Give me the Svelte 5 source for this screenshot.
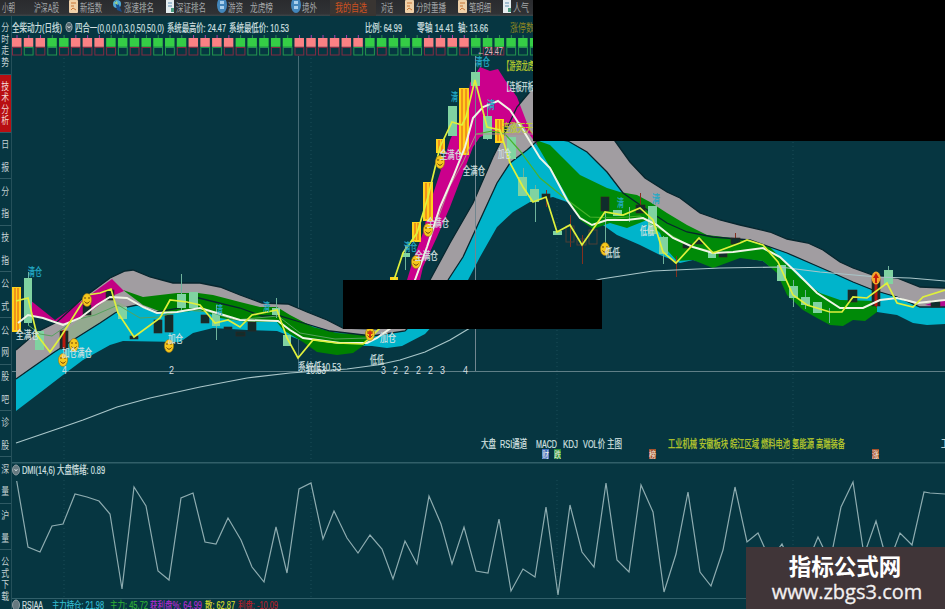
<script>
  const tools = [
    { w: 28, pad: 2, label: '小朝', lw: 13 },
    { w: 41, pad: 6, label: '沪深A股', lw: 25 },
    { w: 44, icon: 'sheet', label: '新指数', lw: 22 },
    { w: 52, icon: 'globe', label: '涨速排名', lw: 30 },
    { w: 52, icon: 'page', label: '深证排名', lw: 30 },
    { w: 33, icon: 'ball', label: '游资', lw: 15 },
    { w: 41, label: '龙虎榜', lw: 23 },
    { w: 39, icon: 'ball', label: '境外', lw: 15 },
    { w: 46, pad: 5, label: '我的自选', lw: 32, hot: true },
    { w: 29, pad: 5, label: '对话', lw: 12 },
    { w: 53, icon: 'sheet', label: '分时重播', lw: 30 },
    { w: 44, icon: 'sheet', label: '笔明细', lw: 22 },
    { w: 31, icon: 'page', label: '人气', lw: 16 }
  ];
  const side = ['日报', '分指', '技指', '公式', '公网', '股吧', '诊股', '深量', '沪量'];

  const topRow = 'PPPGGPPPGGGGGGGPPPPGGGGGPPPPPPGGGGGPPPPGGGGGG';
  const lowRow = 'RGRGRRRRRGRRGGRRGGRRGGRGRRRRRGGRGGGRRGRGRRGGG';

  const dmi = '16.7,481 28,547 40,552 52,526 63,524 75,494 87,497 99,501 110,514 122,589 134,487 146,506 158,571 169,580 181,498 193,493 205,542 216,544 228,518 241,540 252,567 264,582 276,527 287,573 299,489 311,483 323,539 334,511 347,538 358,553 370,535 382,549 393,579 405,541 417,564 429,496 441,524 452,564 464,527 476,571 488,573 499,519 511,591 523,569 535,577 546,507 558,595 570,505 582,552 594,567 606,483 617,560 629,572 641,485 653,512 664,592 676,554 688,492 700,572 711,586 723,550 735,487 747,542 758,533 770,560 782,544 794,572 806,566 818,537 830,562 841,507 853,482 864,555 876,521 888,565 900,533 912,545 924,492 930,493 945,494';

  const grayTop = '16,350 37,332 57,322 83,298 110,278 125,271 133,270 150,277 173,283 200,283 220,287 240,295 262,303 288,304 307,312 327,320 343,328 377,329 405,318 430,280 450,243 473,203 493,157 500,143 517,107 533,88 560,90 590,110 615,141 630,162 645,178 667,192 680,198 700,213 720,220 740,225 770,232 787,239 808,243 823,250 840,262 853,268 873,275 897,278 920,287 945,288';
  const midLine = '16,379 33,367 53,353 73,340 100,323 115,313 127,307 137,305 157,312 180,308 195,297 215,302 240,308 262,316 280,316 300,322 330,331 372,336 405,331 430,306 448,280 463,257 480,220 497,183 510,163 527,150 537,141 552,138 568,141 587,152 607,172 623,193 643,207 667,223 687,232 713,237 750,240 770,247 787,253 810,263 833,273 853,282 873,290 897,297 920,307 945,307';
  const cyanLow = '16,411 37,395 63,375 83,360 110,345 123,341 180,342 193,333 213,328 247,330 277,331 300,340 330,345 372,346 387,348 402,346 425,334 445,312 468,280 480,257 497,227 513,212 530,202 553,197 567,202 583,217 600,223 617,235 640,245 660,255 680,263 693,260 713,265 740,257 763,261 777,272 800,300 830,311 853,310 877,312 897,315 913,323 927,325 945,324';
  const rev = (s) => s.split(' ').reverse().join(' ');

  const white = '18,323 28,315 43,318 63,325 80,318 97,305 110,297 127,298 143,307 157,313 177,312 200,308 217,313 240,320 278,321 290,330 303,338 340,343 367,343 377,338 395,325 415,280 427,247 440,207 453,177 465,147 473,118 483,107 498,101 510,110 523,130 540,158 550,168 567,200 580,218 592,225 607,220 627,220 643,218 657,225 673,238 693,247 713,253 733,252 763,248 780,257 797,273 817,293 840,308 863,308 880,300 897,298 917,303 945,300';
  const yellow = '16,301 28,298 37,335 50,352 60,338 87,295 100,293 111,289 118,313 134,337 160,318 170,300 187,302 200,305 215,323 228,320 240,327 252,315 277,310 287,338 298,358 313,340 337,343 363,344 370,338 383,325 393,283 403,253 417,233 428,197 440,147 452,122 462,125 466,117 475,80 487,127 500,130 510,163 523,187 533,202 546,197 557,232 570,225 582,245 605,212 623,215 640,208 653,220 663,252 676,263 699,238 713,253 740,243 747,240 763,245 778,262 793,295 807,305 830,312 842,312 853,297 867,298 887,283 897,303 913,307 923,297 945,290';
  const greenLine = '28,325 40,334 52,336 75,320 95,315 118,305 140,318 158,317 185,310 210,312 235,320 278,316 300,333 335,339 368,338';
  const greenLine2 = '477,134 492,131 505,134 520,151 540,178 562,196 590,217 615,218 640,216 660,229 690,246 715,252';
  const longLine = '16,443 60,428 83,420 117,407 150,398 200,387 247,378 290,373 347,369 377,365 400,360 425,352 450,340 470,328 520,300 601,279 653,271 720,268 780,267 820,272 877,277 910,278 945,281';

  // x, y, w, h, kind
  const candles = [
    [12, 287, 9, 45, 'gold'], [24, 278, 8, 45, 'mint'], [35, 331, 9, 19, 'mint'], [60, 331, 8, 18, 'dark'],
    [83, 305, 8, 10, 'dark'], [106, 290, 8, 10, 'dark'], [118, 307, 9, 12, 'mint'], [130, 336, 8, 3, 'dark'],
    [154, 320, 8, 13, 'dark'], [165, 315, 8, 17, 'dark'], [177, 294, 9, 14, 'mint'], [189, 292, 9, 16, 'mint'],
    [201, 315, 8, 8, 'dark'], [212, 312, 8, 14, 'mint'], [224, 327, 8, 2, 'dark'], [236, 332, 9, 4, 'dark'],
    [248, 322, 8, 9, 'dark'], [272, 308, 8, 7, 'mint'], [283, 335, 8, 11, 'mint'],
    [390, 277, 8, 4, 'gold'], [402, 253, 8, 4, 'mint'], [412, 222, 9, 20, 'gold'], [423, 182, 10, 39, 'gold'],
    [436, 139, 9, 14, 'gold'], [448, 106, 9, 30, 'mint'], [459, 88, 10, 67, 'gold'], [471, 72, 9, 14, 'mint'],
    [483, 116, 9, 23, 'mint'], [495, 119, 9, 24, 'gold'], [507, 137, 9, 22, 'mint'], [518, 177, 9, 19, 'mint'],
    [530, 189, 9, 13, 'mint'], [542, 194, 8, 5, 'dark'], [553, 231, 9, 4, 'mint'], [566, 226, 8, 16, 'hollow'],
    [577, 239, 9, 6, 'hollow'], [589, 230, 8, 14, 'hollow'], [601, 197, 8, 14, 'dark'], [613, 210, 9, 6, 'mint'],
    [636, 205, 9, 8, 'dark'], [648, 206, 9, 28, 'mint'], [659, 237, 9, 17, 'mint'], [683, 244, 9, 4, 'dark'],
    [695, 240, 8, 4, 'dark'], [708, 252, 8, 6, 'mint'], [719, 253, 8, 4, 'dark'], [731, 238, 9, 6, 'dark'],
    [777, 265, 9, 16, 'mint'], [789, 286, 9, 12, 'mint'], [801, 297, 9, 8, 'mint'], [813, 302, 9, 11, 'mint'],
    [848, 290, 9, 12, 'dark'], [872, 279, 8, 27, 'dark'], [884, 270, 9, 14, 'mint'], [931, 301, 9, 6, 'dark']
  ];
  const wicks = [
    [28, 272, 326], [181, 274, 312], [216, 305, 340], [276, 298, 318], [405, 245, 270], [475, 63, 88], [487, 103, 140],
    [523, 168, 196], [535, 185, 222], [663, 236, 264], [605, 211, 245], [629, 207, 222], [793, 280, 307], [805, 290, 309], [829, 308, 323], [888, 266, 284]
  ];
  const redWicks = [[440, 141, 170], [570, 215, 247], [582, 235, 264], [546, 190, 207], [640, 193, 207], [676, 256, 277], [735, 233, 243], [876, 277, 308], [64, 330, 352]];
  const faces = [[63, 360], [74, 345], [87, 300], [169, 346], [370, 334], [416, 262], [428, 230], [440, 162], [605, 249]];

  // x, baseline, width, text, class
  const marks = [
    [28, 276, 14, '清仓', 'cy'], [16, 339, 23, '全满仓', 'wh'], [62, 357, 30, '加仓满仓', 'wh'], [168, 343, 15, '加仓', 'wh'],
    [216, 314, 7, '清', 'cy'], [263, 311, 7, '清', 'cy'], [298, 371, 43, '系统低10.53', 'wh'], [306, 374, 20, '10.53', 'wh'],
    [370, 364, 14, '低低', 'wh'], [380, 342, 16, '加仓', 'wh'], [404, 251, 13, '清仓', 'cy'], [415, 260, 23, '全满仓', 'wh'], [427, 227, 22, '全满仓', 'wh'],
    [440, 159, 22, '全满仓', 'wh'], [463, 175, 22, '全满仓', 'wh'], [451, 101, 7, '清', 'cy'], [475, 66, 15, '清仓', 'cy'],
    [487, 109, 8, '清', 'cy'], [498, 158, 13, '加仓', 'wh'], [477, 55, 26, '←24.47', 'pk'], [503, 70, 31, '【游资龙虎', 'ye'],
    [503, 91, 31, '【连板开板', 'wh'], [502, 132, 31, '连涨天天', 'ye'], [617, 207, 7, '清', 'cy'], [652, 203, 8, '清', 'cy'],
    [640, 235, 14, '低低', 'wh'], [605, 257, 15, '低低', 'wh'],
    [62, 374, 5, '4', 'num'], [169, 374, 5, '2', 'num'], [381, 374, 5, '3', 'num'], [393, 374, 5, '2', 'num'], [404, 374, 5, '2', 'num'], [416, 374, 5, '2', 'num'],
    [428, 374, 5, '2', 'num'], [440, 374, 5, '3', 'num'], [463, 374, 5, '4', 'num'],
    [481, 448, 15, '大盘', 'wh'], [500, 448, 27, 'RSI通道', 'wh'], [536, 448, 21, 'MACD', 'wh'], [563, 448, 15, 'KDJ', 'wh'],
    [583, 448, 22, 'VOL价', 'wh'], [607, 448, 15, '主图', 'wh'],
    [668, 448, 29, '工业机械', 'ye'], [699, 448, 29, '安徽板块', 'ye'], [730, 448, 29, '皖江区域', 'ye'], [761, 448, 29, '燃料电池', 'ye'],
    [792, 448, 22, '氢能源', 'ye'], [816, 448, 29, '高端装备', 'ye'], [941, 448, 8, '工', 'wh']
  ];
  const info = [
    [12, 50, '全柴动力(日线)'], [75, 89, '四合一(0,0,0,0,3,0,50,50,0)'], [167, 59, '系统最高价: 24.47'], [229, 60, '系统最低价: 10.53'],
    [365, 37, '比例: 64.99'], [417, 37, '零轴 14.41'], [458, 30, '轴: 13.66']
  ];
  const badges = [[542, '财', '#3f6fc0'], [554, '跌', '#2a8f36'], [649, '榜', '#a5512c'], [872, '涨', '#a5512c']];
  const rsi = [
    [22, 21, 'RSIAA', '#d0dcde'], [52, 52, '主力持仓: 21.98', '#35bfd2'], [110, 38, '主力: 45.72', '#2fae35'],
    [150, 52, '获利盘%: 64.99', '#b32ad0'], [205, 30, '散: 62.87', '#d6dc2c'], [238, 40, '利盘: -10.09', '#b51f2b']
  ];
</script>

{#snippet fit(x, y, w, text, size)}
  <text {x} {y} font-size={size} textLength={w} lengthAdjust="spacingAndGlyphs">{text}</text>
{/snippet}

<div class="app">
  <header class="toolbar">
    {#each tools as t}
      <div class="tool" class:hot={t.hot} style="width:{t.w}px;padding-left:{t.pad ?? 0}px">
        {#if t.icon}
          <svg class="ico" width="11" height="14" viewBox="0 0 11 14">
            {#if t.icon === 'sheet'}
              <rect x="0" y="0" width="9" height="13" rx="1" fill="#efd0a8" />
              <path d="M2 3h5M2 6h3M2 10l2-2 3 2" stroke="#c87534" fill="none" />
            {:else if t.icon === 'globe'}
              <circle cx="4" cy="4" r="4" fill="#4dabda" />
              <path d="M2 1l4 4 3 7-5-2z" fill="#194f91" /><path d="M1 3l3-2 1 4z" fill="#9fd48b" />
            {:else if t.icon === 'page'}
              <rect x="1" y="0" width="8" height="13" fill="#e5edf0" />
              <path d="M3 3h4M3 6h4" stroke="#5e8db0" /><rect x="6" y="8" width="3" height="4" fill="#4a9b80" />
            {:else}
              <ellipse cx="5" cy="5" rx="5" ry="8" fill="#4386bb" />
              <path d="M3 1h4v3H3zM3 6h4v3H3z" fill="#a9d0ed" />
            {/if}
          </svg>
        {/if}
        <svg class="label" width={t.lw} height="16" viewBox="0 0 {t.lw} 16">{@render fit(0, 11.5, t.lw, t.label, 11.5)}</svg>
      </div>
    {/each}
  </header>

  <div class="body">
    <nav class="side">
      <div class="cell tight first"><span>分</span><span>时</span><span>走</span><span>势</span></div>
      <div class="cell tight active"><span>技</span><span>术</span><span>分</span><span>析</span></div>
      {#each side as s}
        <div class="cell">{#each s as c}<span>{c}</span>{/each}</div>
      {/each}
      <div class="cell tight last"><span>公</span><span>式</span><span>下</span><span>载</span></div>
    </nav>

    <main>
      <svg class="price" width="933" height="446" viewBox="12 16 933 446">
        <g class="dots">
          {#each [64, 311, 557, 793] as x}<line x1={x} x2={x} y1="58" y2="461" />{/each}
        </g>
        <line x1="12" x2="945" y1="371.5" y2="371.5" stroke="#5f7f87" />
        <line x1="298.5" x2="298.5" y1="56" y2="371" stroke="#456c76" />

        <polygon points="{grayTop} {rev(midLine)}" fill="#a19da1" />
        <polygon points="{midLine} {rev(cyanLow)}" fill="#00b4cb" />
        <polygon points="60,337 80,318 97,305 112,299 126,306 100,322 73,339" fill="#93a98f" />
        <polygon points="123,290 143,297 177,293 198,293 213,295 240,302 260,307 277,307 290,315 313,327 337,333 367,335 367,343 353,353 337,355 317,352 303,342 283,330 277,322 247,322 220,318 200,310 167,314 143,305" fill="#008000" />
        <polygon points="533,139 550,145 562,157 580,175 607,188 620,192 637,195 650,202 667,213 687,225 707,235 740,239 770,247 800,278 820,293 840,300 877,301 877,312 865,321 853,320 843,326 830,325 817,318 803,310 787,295 777,273 763,261 740,258 713,268 693,260 677,261 667,250 660,233 647,220 627,228 610,223 593,229 580,220 565,193 540,150" fill="#008a08" />
        <polygon points="30,300 55,320 83,300 112,279 124,291 110,297 83,317 66,324 50,320 32,315" fill="#c20083" />
        <polygon points="407,280 413,260 423,233 430,203 440,173 450,140 468,103 470,83 480,67 490,71 498,69 505,80 517,97 527,123 538,146 520,122 507,125 493,132 480,137 473,147 463,173 450,207 437,237 423,267 420,280" fill="#cb008c" />
        <polygon points="925,305 945,299 945,307" fill="#b00a90" />

        <polyline points={grayTop} class="edge" />
        <polyline points={midLine} class="edge" />
        <line x1="475.5" x2="475.5" y1="56" y2="371" stroke="#71868f" />

        {#each wicks as [x, a, b]}<line x1={x + 0.5} x2={x + 0.5} y1={a} y2={b} stroke="#6fb39b" />{/each}
        {#each redWicks as [x, a, b]}<line x1={x + 0.5} x2={x + 0.5} y1={a} y2={b} stroke="#84301f" />{/each}
        {#each candles as [x, y, w, h, k]}
          <rect {x} {y} width={w} height={h} class={k} />
          {#if k === 'gold' && h > 10}
            <path d="M{x + 3} {y + 1}v{h - 3}M{x + w - 3} {y + 1}v{h - 3}" stroke="#e0551a" stroke-width="1" />
          {/if}
        {/each}
        <path d="M876 279v27M64 330v18" stroke="#b8190e" stroke-width="3" />

        <polyline points={longLine} fill="none" stroke="#a9c6c9" stroke-width="1.2" />
        <polyline points={greenLine} fill="none" stroke="#56a25e" stroke-width="1" />
        <polyline points={greenLine2} fill="none" stroke="#48b22c" stroke-width="1.2" />
        <polyline points="415,280 450,186 463,162 476,134 533,134" fill="none" stroke="#b38a8d" stroke-width="1" />
        <polyline points={white} fill="none" stroke="#f0f5e6" stroke-width="2" />
        <polyline points={yellow} fill="none" stroke="#dff03c" stroke-width="1.7" />

        {#each faces as [x, y]}
          <ellipse cx={x} cy={y} rx="4.6" ry="6.5" fill="#f6c81c" stroke="#9c7414" stroke-width=".6" />
          <path d="M{x - 2} {y - 3}v2M{x + 2} {y - 3}v2M{x - 2.5} {y + 1.5}q2.5 3.5 5 0" stroke="#6d3f09" fill="none" />
        {/each}
        <ellipse cx="876" cy="278" rx="4.5" ry="6.5" fill="#f4a72b" />
        <path d="M876 273l-3 5h2v5h2v-5h2z" fill="#c51d0c" />
        <path d="M370 330l-3 4h2v4h2v-4h2z" fill="#d6301a" />

        {#each topRow as c, i}
          {@const x = 12 + i * 11.77}
          <line x1={x + 5} x2={x + 5} y1="35" y2="38" stroke={c === 'P' ? '#b13fae' : '#2d8e50'} />
          <rect {x} y="38" width="9.5" height="8.8" fill={c === 'P' ? '#fb8184' : '#35cd46'} />
          <rect x={x + 0.5} y="47.5" width="8.8" height="7.5" fill="none" stroke={lowRow[i] === 'R' ? '#822b43' : '#23954e'} />
        {/each}

        <g class="wh">
          {#each info as [x, w, t]}{@render fit(x, 31.5, w, t, 11.5)}{/each}
        </g>
        <g fill="#8f8520">{@render fit(510, 31.5, 24, '涨停数', 11.5)}</g>
        <ellipse cx="69" cy="27" rx="3" ry="4.5" fill="#52686f" stroke="#9cabb0" />
        <path d="M67.5 26l1.5 2 1.5-2" fill="none" stroke="#c5d0d3" />

        {#each marks as [x, y, w, t, cls]}
          <g class={cls}>{@render fit(x, y, w, t, cls === 'num' ? 10.5 : 11.5)}</g>
        {/each}
        {#each badges as [x, t, f]}
          <rect {x} y="449" width="7" height="10" fill={f} />
          <g fill="#f2efe4">{@render fit(x, 458, 7, t, 9)}</g>
        {/each}
      </svg>

      <svg class="panel" width="933" height="136" viewBox="12 462 933 136">
        <g class="dots">
          {#each [64, 311, 557, 793] as x}<line x1={x} x2={x} y1="480" y2="597" />{/each}
        </g>
        <line x1="12" x2="945" y1="462.5" y2="462.5" stroke="#315f69" stroke-width="2" />
        <ellipse cx="16" cy="470" rx="3.5" ry="5" fill="#667980" stroke="#8f9da2" />
        <path d="M14.5 469l1.5 2 1.5-2" fill="none" stroke="#c5d0d3" />
        <g class="wh">
          {@render fit(22, 474, 33, 'DMI(14,6)', 11)}
          {@render fit(57, 474, 48, '大盘情绪: 0.89', 11)}
        </g>
        <polyline points={dmi} fill="none" stroke="#8eacb0" stroke-width="1.2" />
      </svg>

      <svg class="panel" width="933" height="11" viewBox="12 598 933 11">
        <line x1="12" x2="945" y1="598" y2="598" stroke="#315f69" stroke-width="2" />
        <ellipse cx="16" cy="605" rx="3.5" ry="5" fill="#667980" stroke="#8f9da2" />
        {#each rsi as [x, w, t, f]}
          <g fill={f} stroke={f} stroke-width=".2">{@render fit(x, 609, w, t, 10.5)}</g>
        {/each}
      </svg>
    </main>
  </div>

  <div class="mask corner"></div>
  <div class="mask strip"></div>
  <div class="stamp">
    <strong>指标公式网</strong>
    <span>www.zbgs3.com</span>
  </div>
</div>

<style>
  :global(body) { margin: 0; background: #063641; }
  .app {
    position: relative;
    width: 945px;
    height: 609px;
    overflow: hidden;
    background: #063641;
    font-family: "Liberation Sans", "Noto Sans CJK SC", sans-serif;
  }
  svg { display: block; }
  .toolbar {
    display: flex;
    height: 16px;
    box-sizing: border-box;
    background: linear-gradient(#2a2b2e, #303235 85%, #3e474a);
  }
  .tool { display: flex; flex: none; box-sizing: border-box; fill: #a3a6a8; }
  .tool.hot { fill: #cf5221; background: #393532; }
  .ico { flex: none; }
  .label { flex: none; overflow: visible; }
  .body { display: flex; height: 593px; }
  .side {
    width: 12px;
    height: 593px;
    box-sizing: border-box;
    flex: none;
    border-right: 1px solid #24505a;
    color: #c3d2d5;
    font-size: 10.5px;
    line-height: 12px;
  }
  .cell {
    display: flex;
    flex-direction: column;
    justify-content: space-around;
    align-items: center;
    height: 46.35px;
    box-sizing: border-box;
    border-bottom: 1px solid #2f5a64;
  }
  .cell span { transform: scaleX(.75); }
  .cell.tight { justify-content: center; line-height: 11.5px; }
  .cell.first { height: 59px; }
  .cell.active { height: 58px; background: #b80f12; color: #f3d9d5; }
  .cell.last { height: 58px; border: 0; }
  main { display: flex; flex-direction: column; flex: 1; }
  .price, .panel { flex: none; }
  .dots { stroke: #1b4c59; stroke-dasharray: 1 3; }
  .edge { fill: none; stroke: #07262e; stroke-width: 1.3; }
  .gold { fill: #ffd21c; }
  .mint { fill: #80d3a1; }
  .dark { fill: #102d2c; stroke: #3a231c; stroke-width: .6; }
  .hollow { fill: none; stroke: #4d3e37; }
  .cy { fill: #23aac6; stroke: #23aac6; stroke-width: .25; }
  .wh { fill: #d5e1e1; stroke: #d5e1e1; stroke-width: .2; }
  .num { fill: #d5dfe0; }
  .ye { fill: #bccd2c; stroke: #bccd2c; stroke-width: .25; }
  .pk { fill: #e0b3bd; }
  .mask { position: absolute; background: #000; }
  .corner { left: 533px; top: 0; width: 412px; height: 141px; }
  .strip { left: 343px; top: 280px; width: 259px; height: 49px; }
  .stamp {
    position: absolute;
    right: 0;
    bottom: 0;
    width: 199px;
    height: 62px;
    box-sizing: border-box;
    padding: 5px 0 0 3px;
    display: flex;
    flex-direction: column;
    align-items: center;
    background: #403538;
    color: #fff;
  }
  .stamp strong {
    font: 700 22.5px/27px "Noto Sans CJK SC", sans-serif;
    margin-right: 4px;
  }
  .stamp span {
    font: 400 20px/25px "Open Sans", sans-serif;
    color: #f3f0f0;
    -webkit-text-stroke: .3px #f3f0f0;
  }
</style>
